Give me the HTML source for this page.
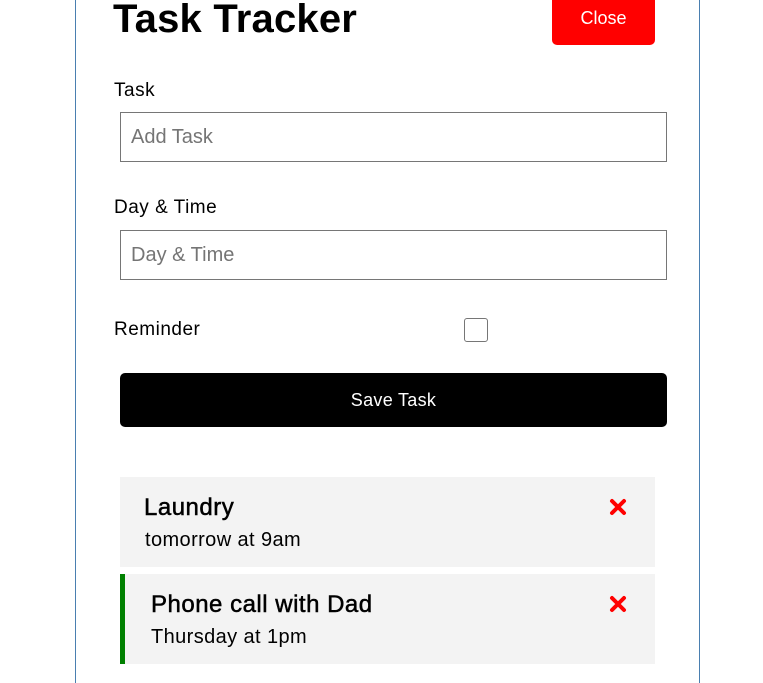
<!DOCTYPE html>
<html style="overflow:hidden;height:683px"><head><style>
body{margin:0;width:763px;height:683px;background:#fff;overflow:hidden;font-family:"Liberation Sans",sans-serif;position:relative}
.c{position:absolute;left:75px;top:-10px;width:623px;height:693px;border:1px solid #4a7fb0;border-bottom:none}
h1{position:absolute;left:113px;top:-3px;margin:0;font-size:40px;font-weight:bold;letter-spacing:0.2px;color:#000}
.btn{position:absolute;background:red;color:#fff;border-radius:5px;left:552px;top:-6px;width:103px;height:51px;font-size:18px;text-align:center;line-height:48px}
.lbl{position:absolute;left:114px;font-size:19px;color:#000;letter-spacing:0.5px}
.in{position:absolute;left:120px;width:545px;height:48px;border:1px solid #767676;font-size:20px;color:#757575;line-height:48px;box-sizing:content-box}
.in span{margin-left:10px}
.cb{position:absolute;left:464px;top:318px;width:22px;height:22px;border:1.5px solid #767676;border-radius:3px}
.save{position:absolute;left:120px;top:373px;width:547px;height:54px;background:#000;color:#fff;border-radius:5px;text-align:center;line-height:54px;font-size:18px;letter-spacing:0.3px}
.t{position:absolute;left:120px;width:535px;height:90px;background:#f3f3f3}
.t b{position:absolute;top:17px;font-size:24px;font-weight:normal;color:#000;-webkit-text-stroke:0.5px #000;letter-spacing:0.5px}
.t i{position:absolute;top:52px;font-style:normal;font-size:20px;color:#000;letter-spacing:0.4px}
.x{position:absolute;left:488px;top:20px}
</style></head><body>
<div class="c"></div>
<h1>Task Tracker</h1>
<div class="btn">Close</div>
<div class="lbl" style="top:80px">Task</div>
<div class="in" style="top:112px"><span>Add Task</span></div>
<div class="lbl" style="top:197px">Day &amp; Time</div>
<div class="in" style="top:230px"><span>Day &amp; Time</span></div>
<div class="lbl" style="top:319px">Reminder</div>
<div class="cb"></div>
<div class="save">Save Task</div>
<div class="t" style="top:477px"><b style="left:24px">Laundry</b><i style="left:25px">tomorrow at 9am</i>
<svg class="x" width="20" height="20" viewBox="0 0 20 20"><path d="M4 4L16 16M16 4L4 16" stroke="#f00" stroke-width="4" stroke-linecap="round"/></svg></div>
<div class="t" style="top:574px;border-left:5px solid #008000;width:530px"><b style="left:26px">Phone call with Dad</b><i style="left:26px">Thursday at 1pm</i>
<svg class="x" style="left:483px" width="20" height="20" viewBox="0 0 20 20"><path d="M4 4L16 16M16 4L4 16" stroke="#f00" stroke-width="4" stroke-linecap="round"/></svg></div>
</body></html>
